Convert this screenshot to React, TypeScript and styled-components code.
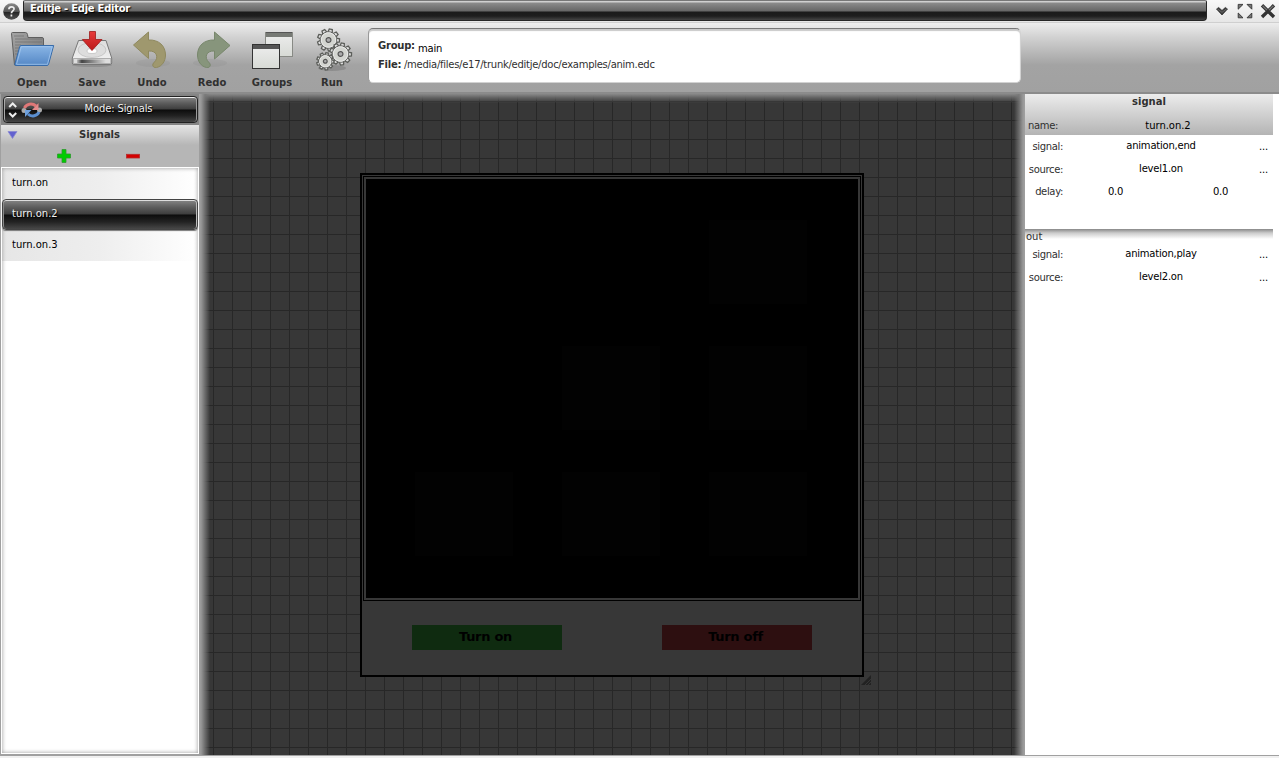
import React from "react";
import styled, { createGlobalStyle } from "styled-components";

const GlobalStyle = createGlobalStyle`
  html, body { margin: 0; padding: 0; background: #f0f0f0; overflow: hidden; }
  * { box-sizing: border-box; }
  body { font-family: "DejaVu Sans", sans-serif; font-size: 10px; line-height: 12px; color: #000; }
  svg { display: block; flex: none; }
`;

const glossy = `linear-gradient(180deg, #868686 0%, #5c5c5c 25%, #3d3d3d 49%, #0c0c0c 51%, #222 75%, #474747 100%)`;

const Window = styled.div`
  width: 1279px;
  height: 758px;
  display: flex;
  flex-direction: column;
  overflow: hidden;
  white-space: nowrap;
`;

const TitleBar = styled.header`
  height: 23px;
  flex: none;
  display: flex;
  background: linear-gradient(180deg, #f8f8f8, #e6e6e6);
  border-bottom: 1px solid #cfcfcf;
`;

const HelpSlot = styled.div`
  width: 23px;
  padding: 2px 0 0 3px;
`;

const Title = styled.h1`
  margin: 0;
  width: 1184px;
  height: 21px;
  padding: 3px 0 0 6px;
  border-radius: 2px 2px 4px 4px;
  border: 1px solid #262626;
  border-top-color: #777;
  background: linear-gradient(180deg, #d0d0d0 0, #d0d0d0 1px, #8b8b8b 2px, #666 10px, #1b1b1b 11px, #1e1e1e 15px, #444 19px);
  color: #fff;
  font-size: 10px;
  line-height: 10px;
  letter-spacing: -0.26px;
  text-shadow: 1px 1px 1px #000;
`;

const WindowButtons = styled.div`
  flex: 1;
  display: flex;
  gap: 7px;
  padding: 3px 0 0 7px;
`;

const Toolbar = styled.nav`
  height: 71px;
  flex: none;
  display: flex;
  padding-left: 2px;
  background: linear-gradient(180deg, #ededed 0, #d2d2d2 14px, #a3a3a3 42px, #a1a1a1 69px);
  border-bottom: 2px solid #858585;
  border-bottom-color: #8b8b8b;
`;

const Tool = styled.div`
  width: 60px;
  display: flex;
  flex-direction: column;
  align-items: center;
  padding-top: 4px;
`;

const ToolLabel = styled.span`
  margin-top: 2px;
  font-weight: bold;
  color: #303030;
  letter-spacing: 0.05px;
`;

const FileCard = styled.section`
  width: 653px;
  height: 55px;
  margin: 5px 0 0 6px;
  padding: 11px 9px;
  background: #fff;
  border: 1px solid #d2d2d2;
  border-top-color: #777;
  border-left-color: #999;
  border-radius: 5px;
  box-shadow: inset 0 2px 1px #c9c9c9;
`;

const FileRow = styled.div`
  display: flex;
  height: 19px;
  color: #303030;
`;

const FileKey = styled.b<{ $width: number }>`
  width: ${(p) => p.$width}px;
  letter-spacing: -0.25px;
`;

const FileValue = styled.span<{ $drop?: number; $dark?: boolean }>`
  padding-top: ${(p) => p.$drop ?? 0}px;
  letter-spacing: ${(p) => (p.$dark ? "-0.2px" : "-0.27px")};
  color: ${(p) => (p.$dark ? "#000" : "#303030")};
`;

const Body = styled.main`
  height: 661px;
  flex: none;
  display: flex;
`;

const Sidebar = styled.aside`
  width: 199px;
  padding: 0 0 0 1px;
  background: #a0a0a0;
  display: flex;
  flex-direction: column;
`;

const ModeBar = styled.div`
  height: 31px;
  padding: 2px 1px 2px 2px;
  background: #858585;
`;

const ModeButton = styled.div`
  height: 27px;
  display: flex;
  align-items: center;
  border: 1px solid #222;
  border-radius: 4px;
  background: ${glossy};
  box-shadow: inset 0 1px 0 #eee, inset 1px 0 0 #aaa, inset -1px 0 0 #999;
  color: #f0f0f0;
  text-shadow: 1px 1px 1px #000;
  padding-left: 4px;
`;

const ModeLabel = styled.span`
  flex: 1;
  padding: 0 14px 2px 10px;
  text-align: center;
  letter-spacing: -0.15px;
`;

const ListHead = styled.div`
  height: 42px;
  background: linear-gradient(180deg, #e6e6e6 0, #b6b6b6 20px, #b6b6b6 100%);
  color: #303030;
`;

const HeadTitle = styled.div`
  display: flex;
  height: 22px;
  padding: 4px 0 0 6px;
`;

const HeadText = styled.b`
  flex: 1;
  padding-right: 19px;
  text-align: center;
`;

const HeadActions = styled.div`
  display: flex;
  gap: 55px;
  padding: 2px 0 0 56px;
`;

const List = styled.div`
  flex: 1;
  margin: 0 0 1px 0;
  border: 1px solid #fff;
  background: #fff;
  position: relative;
  &::after {
    content: "";
    position: absolute;
    inset: 0;
    pointer-events: none;
    box-shadow: inset 0 0 4px #999;
  }
`;

const Item = styled.div<{ $selected?: boolean }>`
  height: 31px;
  padding: 9px 0 0 10px;
  color: ${(p) => (p.$selected ? "#f2f2f2" : "#000")};
  background: ${(p) => (p.$selected ? glossy : "linear-gradient(90deg, #e6e6e6, #eee 50%, #fff)")};
  ${(p) =>
    p.$selected &&
    `position: relative; z-index: 1; border: 1px solid #444; padding: 8px 0 0 9px; border-radius: 4px;
     text-shadow: 1px 1px 1px #000; box-shadow: inset 0 1px 0 #ddd, inset 1px 0 0 #888, inset -1px 0 0 #bbb, 0 1px 1px #777;`}
`;

const Canvas = styled.section`
  width: 826px;
  padding: 79px 0 0 161px;
  position: relative;
  background:
    repeating-linear-gradient(90deg, transparent 0 14px, #272727 14px 15px, transparent 15px 19px),
    repeating-linear-gradient(180deg, transparent 0 7px, #272727 7px 8px, transparent 8px 19px),
    #373737;
  &::after {
    content: "";
    position: absolute;
    inset: 0;
    pointer-events: none;
    background:
      linear-gradient(90deg, #a0a0a0 0, #989898 2px, rgba(120, 120, 120, 0.8) 6px, rgba(55, 55, 55, 0) 11px),
      linear-gradient(270deg, #a0a0a0 0, #989898 2px, rgba(120, 120, 120, 0.8) 6px, rgba(55, 55, 55, 0) 11px),
      linear-gradient(180deg, #888 0, rgba(105, 105, 105, 0.8) 4px, rgba(55, 55, 55, 0) 9px);
  }
`;

const Stage = styled.div`
  width: 504px;
  height: 504px;
  padding: 1px;
  border: 2px solid #000;
  background: #373737;
`;

const Screen = styled.div`
  width: 498px;
  height: 425px;
  padding: 2px;
  border: 1px solid #000;
`;

const Tiles = styled.div`
  height: 419px;
  background: #000;
  display: grid;
  grid-template-columns: repeat(3, 98px);
  grid-template-rows: repeat(3, 84px);
  gap: 42px 49px;
  padding: 41px 0 0 49px;
`;

const Tile = styled.div<{ $lit: boolean }>`
  background: ${(p) => (p.$lit ? "#020202" : "#000")};
`;

const StageButtons = styled.div`
  display: flex;
  gap: 100px;
  padding: 24px 0 0 49px;
`;

const StageButton = styled.div<{ $color: string }>`
  width: 150px;
  height: 25px;
  padding-right: 3px;
  background: ${(p) => p.$color};
  text-align: center;
  font-weight: bold;
  font-size: 13px;
  line-height: 23px;
  letter-spacing: -0.3px;
`;

const Grip = styled.div`
  position: absolute;
  left: 662px;
  top: 581px;
`;

const Inspector = styled.aside`
  width: 254px;
  padding-right: 6px;
  background: #fff;
`;

const InspectorHead = styled.div`
  height: 41px;
  background: linear-gradient(180deg, #ececec, #b4b4b4);
  color: #303030;
`;

const InspectorTitle = styled.b`
  display: block;
  height: 25px;
  padding-top: 2px;
  text-align: center;
`;

const Group = styled.div<{ $height: number }>`
  height: ${(p) => p.$height}px;
`;

const Row = styled.div<{ $height: number }>`
  height: ${(p) => p.$height}px;
  display: flex;
`;

const Key = styled.span<{ $left?: boolean }>`
  width: 38px;
  padding-top: 1px;
  text-align: right;
  letter-spacing: -0.35px;
  color: #303030;
  ${(p) => p.$left && "text-align: left; padding-left: 3px;"}
`;

const Value = styled.span<{ $top?: number; $spacing?: number }>`
  flex: 1;
  padding: ${(p) => p.$top ?? 0}px 0 0 0;
  letter-spacing: ${(p) => p.$spacing ?? -0.22}px;
  text-align: center;
  color: #000;
`;

const More = styled.span`
  width: 14px;
  padding-top: 1px;
  letter-spacing: -0.2px;
`;

const OutHead = styled.div`
  height: 19px;
  padding: 2px 0 0 1px;
  background: linear-gradient(180deg, #888 0, #ccc 4px, #fff 10px);
  color: #303030;
`;

const StatusEdge = styled.footer`
  height: 3px;
  flex: none;
  background: #f0f0f0;
  border-top: 1px solid #a0a0a0;
`;

const HelpIcon = () => (
  <svg width="18" height="18" viewBox="0 0 18 18">
    <defs>
      <linearGradient id="help" x2="0" y2="1">
        <stop offset="0" stopColor="#8a8a8a" />
        <stop offset=".5" stopColor="#555" />
        <stop offset=".52" stopColor="#222" />
        <stop offset="1" stopColor="#555" />
      </linearGradient>
    </defs>
    <circle cx="8.5" cy="9.5" r="8.3" fill="url(#help)" />
    <path d="M5.9 7.2C6 4 11.4 4.1 11 7.2C10.7 8.8 8.4 9 8.4 11.2M8.4 12.5v2" fill="none" stroke="#eee" strokeWidth="1.7" />
  </svg>
);

const MinimizeIcon = () => (
  <svg width="16" height="16" viewBox="0 0 16 16">
    <path d="M2.5 6L4.7 4.5L8 7.5L11.3 4.5L13.5 6L8 12Z" fill="#3a3a3a" stroke="#333" strokeWidth=".8" />
    <path d="M3.5 5.8L8 9.4L12.5 5.8" fill="none" stroke="#707070" strokeWidth=".9" />
  </svg>
);

const MaximizeIcon = () => (
  <svg width="16" height="16" viewBox="0 0 16 16">
    <path d="M1.2 1.4H6L1.2 6.2ZM14.8 1.4V6.2L10 1.4ZM1.2 14.8V10L6 14.8ZM14.8 14.8H10L14.8 10Z" fill="#777" stroke="#333" strokeWidth=".9" />
  </svg>
);

const CloseIcon = () => (
  <svg width="16" height="16" viewBox="0 0 16 16">
    <path d="M2 2.3L14 14M14 2.3L2 14" stroke="#333" strokeWidth="3.4" />
    <path d="M2.6 2.8L7 7M13.4 2.8L9 7" stroke="#777" strokeWidth="1.2" />
  </svg>
);

const OpenIcon = () => (
  <svg width="48" height="48" viewBox="0 0 48 48">
    <defs>
      <linearGradient id="blue" x2="0" y2="1">
        <stop offset="0" stopColor="#8ab6e6" />
        <stop offset="1" stopColor="#5487c5" />
      </linearGradient>
      <linearGradient id="grayf" x2="1" y2="1">
        <stop offset="0" stopColor="#a5a5a5" />
        <stop offset="1" stopColor="#747474" />
      </linearGradient>
    </defs>
    <path d="M3.5 6.5Q3.5 5.5 4.5 5.5H17.5Q19 5.5 19.5 7.5L20 10.5H34Q35.5 10.5 35.5 12V38H6.5Z" fill="url(#grayf)" stroke="#5f5f5f" />
    <path d="M6 9H16M7 12H34M7 15H34M7 18H13M7 21H12M7 24H11M7 27H10" stroke="#6e6e6e" strokeWidth=".7" />
    <path d="M12.5 18.5H45.7L40.5 37.5Q40 38.5 39 38.5H7.5Q6.5 38.5 7 36.5L11.6 20Z" fill="url(#blue)" stroke="#376ba9" />
    <path d="M13.3 19.7H44.2L39.5 37.3H8.5Z" fill="none" stroke="#a5c8ef" strokeWidth=".8" />
  </svg>
);

const SaveIcon = () => (
  <svg width="48" height="48" viewBox="0 0 48 48">
    <defs>
      <linearGradient id="disk" x2="0" y2="1">
        <stop offset="0" stopColor="#ddd" />
        <stop offset="1" stopColor="#f4f4f4" />
      </linearGradient>
      <linearGradient id="front" x2="1" y2="0">
        <stop offset="0" stopColor="#bbb" />
        <stop offset=".15" stopColor="#444" />
        <stop offset=".9" stopColor="#ddd" />
      </linearGradient>
      <linearGradient id="red" x2="0" y2="1">
        <stop offset="0" stopColor="#e83c3c" />
        <stop offset="1" stopColor="#bb1919" />
      </linearGradient>
    </defs>
    <ellipse cx="24" cy="38" rx="20" ry="2" fill="#777" opacity=".45" />
    <path d="M10.5 13.5H38L43.7 31V36Q43.7 37.5 42 37.5H6Q4.3 37.5 4.3 36V31Z" fill="url(#disk)" stroke="#777" />
    <ellipse cx="24" cy="23" rx="14" ry="7.5" fill="#ddd" stroke="#bbb" strokeWidth=".7" />
    <ellipse cx="24" cy="24" rx="5" ry="2.5" fill="#fff" stroke="#aaa" strokeWidth=".5" />
    <path d="M5.4 31.5H42.8V36.5H5.4Z" fill="#dedede" stroke="#888" strokeWidth=".6" />
    <path d="M9 32.5H41V36H9Z" fill="url(#front)" />
    <path d="M21.5 4.5H27.5V12.5H34L24 23.5L14.3 12.5H21.5Z" fill="url(#red)" stroke="#9d1c1c" strokeWidth=".8" />
  </svg>
);

const UndoIcon = () => (
  <svg width="48" height="48" viewBox="0 0 48 48">
    <ellipse cx="25" cy="36" rx="17" ry="4" fill="#888" opacity=".2" />
    <path d="M5.5 18L20.5 5V13C31 12.5 37.5 19 37.5 28C37.5 34 34 39.5 28.5 40.5C24.5 41 23.5 37.5 26.5 35C30.5 31 29.5 23.5 20.5 24V31.5Z" fill="#9f986e" stroke="#8f895f" />
  </svg>
);

const RedoIcon = () => (
  <svg width="48" height="48" viewBox="0 0 48 48">
    <ellipse cx="22" cy="36" rx="17" ry="4" fill="#888" opacity=".2" />
    <path d="M42 18.5L26.5 5V13C16 12.5 9.5 19 9.5 28C9.5 34 13 39.5 18.5 40.5C22.5 41 23.5 37.5 20.5 35C16.5 31 17.5 23.5 26.5 24V32Z" fill="#87957c" stroke="#78876c" />
  </svg>
);

const GroupsIcon = () => (
  <svg width="48" height="48" viewBox="0 0 48 48">
    <defs>
      <linearGradient id="pane" x2="0" y2="1">
        <stop offset="0" stopColor="#eee" />
        <stop offset="1" stopColor="#d7dad5" />
      </linearGradient>
    </defs>
    <rect x="17.5" y="5.5" width="27" height="24" fill="url(#pane)" stroke="#888a85" />
    <rect x="18" y="6" width="26" height="4" fill="#777a75" />
    <rect x="4.5" y="17.5" width="27" height="24" fill="url(#pane)" stroke="#333" />
    <rect x="5" y="18" width="26" height="4" fill="#555" />
    <path d="M18 5.5H44" stroke="#555" />
  </svg>
);

const Gear = ({ x, y, r }: { x: number; y: number; r: number }) => (
  <g transform={`translate(${x} ${y}) rotate(12)`}>
    {[0, 40, 80, 120, 160, 200, 240, 280, 320].map((a) => (
      <path
        key={a}
        transform={`rotate(${a})`}
        d={`M${-r * 0.2} ${-r * 0.7}L${-r * 0.14} ${-r}H${r * 0.14}L${r * 0.2} ${-r * 0.7}Z`}
        fill="#ddd"
        stroke="#5b5d59"
        strokeWidth="1.3"
      />
    ))}
    <circle r={r * 0.75} fill="#dcddda" stroke="#5b5d59" strokeWidth=".8" />
    <circle r={r * 0.66} fill="#d3d5d0" stroke="#eee" strokeWidth=".7" />
    <circle r={r * 0.22} fill="#aaa" stroke="#555" strokeWidth="1.2" />
  </g>
);

const RunIcon = () => (
  <svg width="48" height="48" viewBox="0 0 48 48">
    <ellipse cx="24" cy="41" rx="14" ry="3" fill="#777" opacity=".5" />
    <Gear x={20.5} y={13} r={11} />
    <Gear x={32.5} y={27} r={11} />
    <Gear x={17.3} y={34.3} r={8.6} />
  </svg>
);

const ModeIcon = () => (
  <svg width="36" height="22" viewBox="0 0 36 22">
    <path d="M1 8L4.5 4.5L8 8M1 14L4.5 17.5L8 14" transform="translate(.2 0)" fill="none" stroke="#eee" strokeWidth="2" />
    <circle cx="16" cy="11.5" r="2.5" fill="#aaa" />
    <circle cx="31.5" cy="11" r="2.5" fill="#aaa" />
    <path d="M16.5 9C18 5 24 3.5 28 7" fill="none" stroke="#e07777" strokeWidth="3" />
    <path d="M30.5 4V11H24Z" fill="#e58a8a" />
    <path d="M31 13C29.5 17 23.5 18.5 20 15" fill="none" stroke="#5b8fd0" strokeWidth="3" />
    <path d="M17 18V11H23.5Z" fill="#6ea0dd" />
  </svg>
);

const DisclosureIcon = () => (
  <svg width="12" height="12" viewBox="0 0 12 12">
    <path d="M1 2.5H10L5.5 9.5Z" fill="#6261cf" stroke="#8a8ad0" strokeWidth=".8" />
  </svg>
);

const PlusIcon = () => (
  <svg width="14" height="14" viewBox="0 0 14 14">
    <path d="M5 .5H9V5H13.5V9H9V13.5H5V9H.5V5H5Z" fill="#0c0" stroke="#2f9a2f" strokeWidth=".8" />
  </svg>
);

const MinusIcon = () => (
  <svg width="14" height="14" viewBox="0 0 14 14">
    <rect x=".5" y="5.3" width="13" height="3.7" fill="#d40000" stroke="#b52b2b" strokeWidth=".8" />
  </svg>
);

const tools = [
  { label: "Open", Icon: OpenIcon },
  { label: "Save", Icon: SaveIcon },
  { label: "Undo", Icon: UndoIcon },
  { label: "Redo", Icon: RedoIcon },
  { label: "Groups", Icon: GroupsIcon },
  { label: "Run", Icon: RunIcon },
];

const lit = [false, false, true, false, true, true, true, true, true];

export default function App() {
  return (
    <Window>
      <GlobalStyle />
      <TitleBar>
        <HelpSlot><HelpIcon /></HelpSlot>
        <Title>Editje - Edje Editor</Title>
        <WindowButtons>
          <MinimizeIcon />
          <MaximizeIcon />
          <CloseIcon />
        </WindowButtons>
      </TitleBar>
      <Toolbar>
        {tools.map(({ label, Icon }) => (
          <Tool key={label}>
            <Icon />
            <ToolLabel>{label}</ToolLabel>
          </Tool>
        ))}
        <FileCard>
          <FileRow>
            <FileKey $width={40}>Group:</FileKey>
            <FileValue $drop={3} $dark>main</FileValue>
          </FileRow>
          <FileRow>
            <FileKey $width={26}>File:</FileKey>
            <FileValue>/media/files/e17/trunk/editje/doc/examples/anim.edc</FileValue>
          </FileRow>
        </FileCard>
      </Toolbar>
      <Body>
        <Sidebar>
          <ModeBar>
            <ModeButton>
              <ModeIcon />
              <ModeLabel>Mode: Signals</ModeLabel>
            </ModeButton>
          </ModeBar>
          <ListHead>
            <HeadTitle>
              <DisclosureIcon />
              <HeadText>Signals</HeadText>
            </HeadTitle>
            <HeadActions>
              <PlusIcon />
              <MinusIcon />
            </HeadActions>
          </ListHead>
          <List>
            <Item>turn.on</Item>
            <Item $selected>turn.on.2</Item>
            <Item>turn.on.3</Item>
          </List>
        </Sidebar>
        <Canvas>
          <Stage>
            <Screen>
              <Tiles>
                {lit.map((on, i) => (
                  <Tile key={i} $lit={on} />
                ))}
              </Tiles>
            </Screen>
            <StageButtons>
              <StageButton $color="#0f2b10">Turn on</StageButton>
              <StageButton $color="#2d0f10">Turn off</StageButton>
            </StageButtons>
          </Stage>
          <Grip>
            <svg width="11" height="11" viewBox="0 0 11 11">
              <path d="M0 10L10 0V10Z" fill="#222" />
              <path d="M3.5 10.5L10.5 3.5M6.5 10.5L10.5 6.5" stroke="#3a3a3a" strokeWidth=".8" />
            </svg>
          </Grip>
        </Canvas>
        <Inspector>
          <InspectorHead>
            <InspectorTitle>signal</InspectorTitle>
            <Row $height={16}>
              <Key $left>name:</Key>
              <Value $top={1} $spacing={-0.05}>turn.on.2</Value>
            </Row>
          </InspectorHead>
          <Group $height={94}>
            <Row $height={5} />
            <Row $height={23}>
              <Key>signal:</Key>
              <Value>animation,end</Value>
              <More>...</More>
            </Row>
            <Row $height={22}>
              <Key>source:</Key>
              <Value>level1.on</Value>
              <More>...</More>
            </Row>
            <Row $height={22}>
              <Key>delay:</Key>
              <Value $top={1}>0.0</Value>
              <Value $top={1}>0.0</Value>
            </Row>
          </Group>
          <OutHead>out</OutHead>
          <Row $height={23}>
            <Key>signal:</Key>
            <Value>animation,play</Value>
            <More>...</More>
          </Row>
          <Row $height={22}>
            <Key>source:</Key>
            <Value>level2.on</Value>
            <More>...</More>
          </Row>
        </Inspector>
      </Body>
      <StatusEdge />
    </Window>
  );
}
